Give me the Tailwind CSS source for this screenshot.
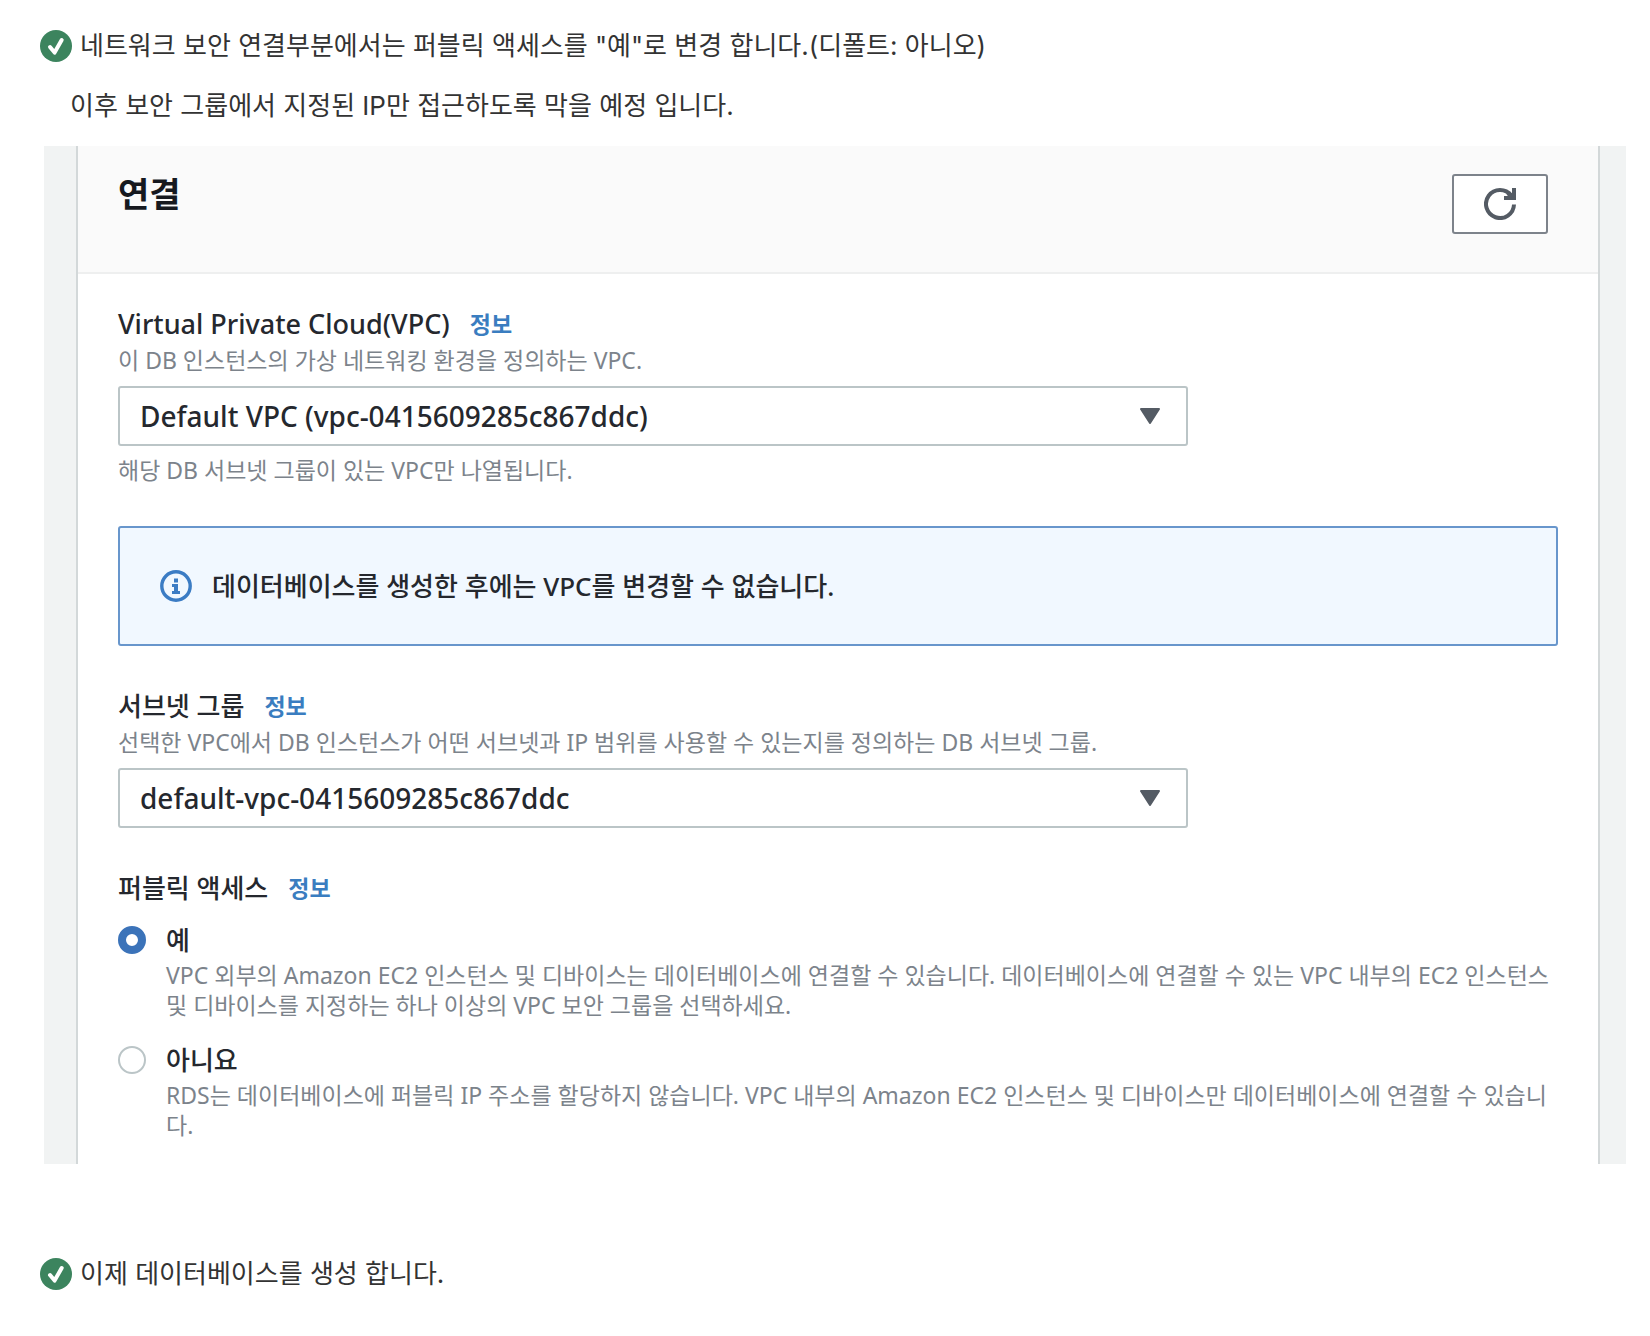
<!DOCTYPE html>
<html lang="ko">
<head>
    <meta charset="UTF-8">
    <meta name="viewport" content="width=device-width, initial-scale=1.0">
    <title>RDS 데이터베이스 연결 설정</title>
    <script src="https://cdn.jsdelivr.net/npm/@tailwindcss/browser@4"></script>
</head>
<body class="bg-white text-[#333333] font-['Inter','Noto_Sans_CJK_KR',sans-serif]">
    <main class="pt-4 pr-6 pb-8 pl-10">
        <!-- Step: public access -->
        <p class="flex items-center gap-2 text-[26px] leading-[60px]">
            <svg class="size-8 shrink-0" viewBox="0 0 32 32" aria-hidden="true">
                <circle cx="16" cy="16" r="16" fill="#3c845e"/>
                <path d="M10 17l4.6 5.6L21.7 10" fill="none" stroke="#fff" stroke-width="4" stroke-linecap="round" stroke-linejoin="round"/>
            </svg>
            <span>네트워크 보안 연결부분에서는 퍼블릭 액세스를 "예"로 변경 합니다.(디폴트: 아니오)</span>
        </p>
        <p class="pl-[30px] text-[26px] leading-[60px]">이후 보안 그룹에서 지정된 IP만 접근하도록 막을 예정 입니다.</p>

        <section class="mt-[10px] ml-1 bg-[#f1f3f3] pl-8 pr-[26px] text-[#25282e] font-['Noto_Sans','Noto_Sans_CJK_KR',sans-serif]">
            <div class="border-x-2 border-[#d3d8d9] bg-white">
                <header class="flex items-start justify-between border-b-2 border-[#eeefef] bg-[#fafafa] pt-7 pr-[50px] pb-[38px] pl-10">
                    <h2 class="text-[34px] leading-10 font-bold text-[#16191f]">연결</h2>
                    <button type="button" aria-label="새로 고침" class="flex h-[60px] w-24 items-center justify-center rounded-[3px] border-2 border-[#7d838b] bg-white">
                        <svg class="size-8" viewBox="0 0 32 32" aria-hidden="true">
                            <path d="M30 16.5A14 14 0 1 1 27.2 7.6" fill="none" stroke="#545b64" stroke-width="4"/>
                            <path d="M28 0H32V12H20V8H24L22.5 6.5L26 3.5L28 5.5z" fill="#545b64"/>
                        </svg>
                    </button>
                </header>

                <form class="pt-[30px] pr-10 pb-6 pl-10">
                    <div class="flex items-center gap-5 leading-10">
                        <label for="vpc" class="text-[27px] font-medium">Virtual Private Cloud(VPC)</label>
                        <a href="#" class="text-[23px] font-bold text-[#3a7dc0]">정보</a>
                    </div>
                    <p class="text-[23px] leading-8 text-[#7c838b]">이 DB 인스턴스의 가상 네트워킹 환경을 정의하는 VPC.</p>
                    <div class="relative mt-[10px] w-[calc(75%-10px)]">
                        <select id="vpc" class="h-[60px] w-full appearance-none rounded-[3px] border-2 border-[#bbc5c7] bg-white pl-5 text-[28px] font-medium">
                            <option>Default VPC (vpc-0415609285c867ddc)</option>
                        </select>
                        <svg class="pointer-events-none absolute top-[22px] right-7 h-4 w-5" viewBox="0 0 20 16" aria-hidden="true">
                            <path d="M1 1h18l-9 14z" fill="#545b64" stroke="#545b64" stroke-width="2" stroke-linejoin="round"/>
                        </svg>
                    </div>
                    <p class="mt-2 text-[23px] leading-8 text-[#7c838b]">해당 DB 서브넷 그룹이 있는 VPC만 나열됩니다.</p>

                    <div class="mt-10 flex h-[120px] items-center gap-5 rounded-[3px] border-2 border-[#6896cc] bg-[#f1f8ff] px-10">
                        <svg class="size-8 shrink-0" viewBox="0 0 32 32" aria-hidden="true">
                            <circle cx="16" cy="16" r="14.2" fill="none" stroke="#3b7cc4" stroke-width="3.4"/>
                            <path d="M14 8.5h4v4h-4zM12 14h6v7h2v3h-8v-3h2v-4h-2z" fill="#3b7cc4"/>
                        </svg>
                        <p class="text-[26px] leading-10 font-medium">데이터베이스를 생성한 후에는 VPC를 변경할 수 없습니다.</p>
                    </div>

                    <div class="mt-10 flex items-center gap-5 leading-10">
                        <label for="subnet" class="text-[26px] font-medium">서브넷 그룹</label>
                        <a href="#" class="text-[23px] font-bold text-[#3a7dc0]">정보</a>
                    </div>
                    <p class="text-[23px] leading-8 text-[#7c838b]">선택한 VPC에서 DB 인스턴스가 어떤 서브넷과 IP 범위를 사용할 수 있는지를 정의하는 DB 서브넷 그룹.</p>
                    <div class="relative mt-[10px] w-[calc(75%-10px)]">
                        <select id="subnet" class="h-[60px] w-full appearance-none rounded-[3px] border-2 border-[#bbc5c7] bg-white pl-5 text-[28px] font-medium">
                            <option>default-vpc-0415609285c867ddc</option>
                        </select>
                        <svg class="pointer-events-none absolute top-[22px] right-7 h-4 w-5" viewBox="0 0 20 16" aria-hidden="true">
                            <path d="M1 1h18l-9 14z" fill="#545b64" stroke="#545b64" stroke-width="2" stroke-linejoin="round"/>
                        </svg>
                    </div>

                    <fieldset class="mt-10">
                        <legend class="flex items-center gap-5 leading-10">
                            <span class="text-[26px] font-medium">퍼블릭 액세스</span>
                            <a href="#" class="text-[23px] font-bold text-[#3a7dc0]">정보</a>
                        </legend>
                        <div class="mt-3 flex gap-5">
                            <input type="radio" id="public-yes" name="public" checked class="mt-[6px] size-7 shrink-0 appearance-none rounded-full border-2 border-[#bbc5c7] bg-white checked:border-8 checked:border-[#3b73b9]">
                            <div>
                                <label for="public-yes" class="block text-[26px] leading-10 font-medium">예</label>
                                <p class="text-[23px] leading-[30px] text-[#7c838b]">VPC 외부의 Amazon EC2 인스턴스 및 디바이스는 데이터베이스에 연결할 수 있습니다. 데이터베이스에 연결할 수 있는 VPC 내부의 EC2 인스턴스 및 디바이스를 지정하는 하나 이상의 VPC 보안 그룹을 선택하세요.</p>
                            </div>
                        </div>
                        <div class="mt-5 flex gap-5">
                            <input type="radio" id="public-no" name="public" class="mt-[6px] size-7 shrink-0 appearance-none rounded-full border-2 border-[#bbc5c7] bg-white checked:border-8 checked:border-[#3b73b9]">
                            <div>
                                <label for="public-no" class="block text-[26px] leading-10 font-medium">아니요</label>
                                <p class="text-[23px] leading-[30px] text-[#7c838b]">RDS는 데이터베이스에 퍼블릭 IP 주소를 할당하지 않습니다. VPC 내부의 Amazon EC2 인스턴스 및 디바이스만 데이터베이스에 연결할 수 있습니다.</p>
                            </div>
                        </div>
                    </fieldset>
                </form>
            </div>
        </section>

        <!-- Step: create the database -->
        <p class="mt-20 flex items-center gap-2 text-[26px] leading-[60px]">
            <svg class="size-8 shrink-0" viewBox="0 0 32 32" aria-hidden="true">
                <circle cx="16" cy="16" r="16" fill="#3c845e"/>
                <path d="M10 17l4.6 5.6L21.7 10" fill="none" stroke="#fff" stroke-width="4" stroke-linecap="round" stroke-linejoin="round"/>
            </svg>
            <span>이제 데이터베이스를 생성 합니다.</span>
        </p>
    </main>
</body>
</html>
